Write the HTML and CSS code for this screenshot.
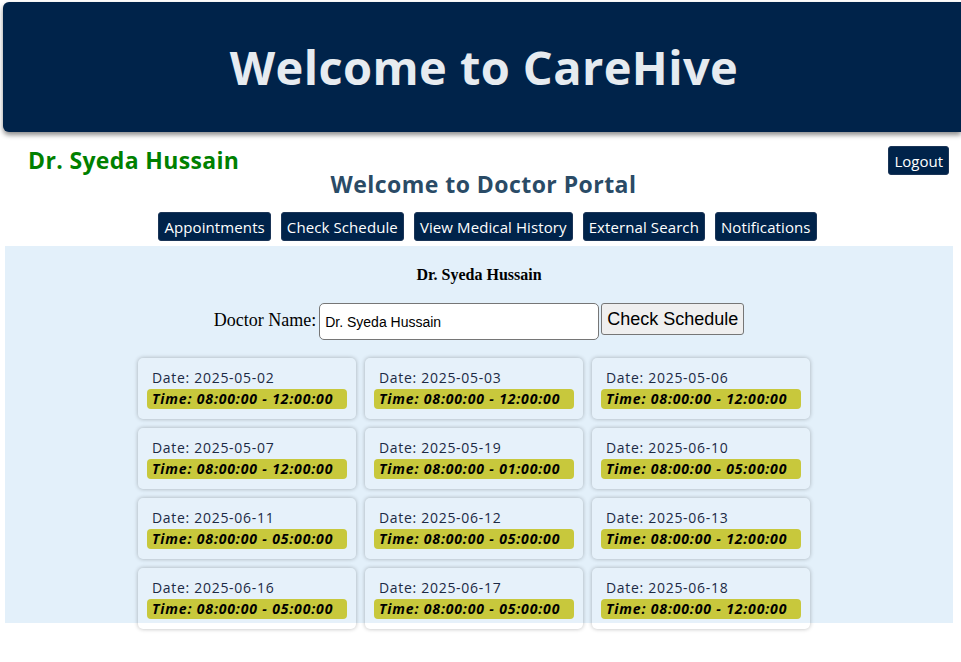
FILE: index.html
```html
<!DOCTYPE html>
<html>
<head>
<meta charset="utf-8">
<link rel="stylesheet" href="styles.css">
</head>
<body>
<header class="hero">
  <h1 class="hero-title">Welcome to CareHive</h1>
</header>
<div class="topbar">
  <h2 class="doc-name">Dr. Syeda Hussain</h2>
  <button class="btn logout">Logout</button>
</div>
<h2 class="portal-title">Welcome to Doctor Portal</h2>
<nav class="nav">
  <button class="btn">Appointments</button>
  <button class="btn">Check Schedule</button>
  <button class="btn">View Medical History</button>
  <button class="btn">External Search</button>
  <button class="btn">Notifications</button>
</nav>
<section class="panel">
  <h3 class="panel-name">Dr. Syeda Hussain</h3>
  <form class="search">
    <label class="search-label">Doctor Name:</label>
    <input class="search-input" type="text" value="Dr. Syeda Hussain">
    <button class="search-btn" type="button">Check Schedule</button>
  </form>
  <div class="grid">
    <div class="card"><p class="date">Date: 2025-05-02</p><p class="time">Time: 08:00:00 - 12:00:00</p></div>
    <div class="card"><p class="date">Date: 2025-05-03</p><p class="time">Time: 08:00:00 - 12:00:00</p></div>
    <div class="card"><p class="date">Date: 2025-05-06</p><p class="time">Time: 08:00:00 - 12:00:00</p></div>
    <div class="card"><p class="date">Date: 2025-05-07</p><p class="time">Time: 08:00:00 - 12:00:00</p></div>
    <div class="card"><p class="date">Date: 2025-05-19</p><p class="time">Time: 08:00:00 - 01:00:00</p></div>
    <div class="card"><p class="date">Date: 2025-06-10</p><p class="time">Time: 08:00:00 - 05:00:00</p></div>
    <div class="card"><p class="date">Date: 2025-06-11</p><p class="time">Time: 08:00:00 - 05:00:00</p></div>
    <div class="card"><p class="date">Date: 2025-06-12</p><p class="time">Time: 08:00:00 - 05:00:00</p></div>
    <div class="card"><p class="date">Date: 2025-06-13</p><p class="time">Time: 08:00:00 - 12:00:00</p></div>
    <div class="card"><p class="date">Date: 2025-06-16</p><p class="time">Time: 08:00:00 - 05:00:00</p></div>
    <div class="card"><p class="date">Date: 2025-06-17</p><p class="time">Time: 08:00:00 - 05:00:00</p></div>
    <div class="card"><p class="date">Date: 2025-06-18</p><p class="time">Time: 08:00:00 - 12:00:00</p></div>
  </div>
</section>
</body>
</html>
```

FILE: styles.css
```css
body {
  margin: 0;
  padding: 0;
  background: #ffffff;
  font-family: "Open Sans", "DejaVu Sans", sans-serif;
}
.hero {
  margin: 2px 0 0 3px;
  height: 130px;
  background: #00234a;
  border-radius: 6px 0 0 6px;
  box-shadow: 0 3px 5px rgba(0, 0, 0, 0.45);
  display: flex;
  align-items: center;
  justify-content: center;
}
.hero-title {
  margin: 0 0 0 4px;
  color: #e6ebf0;
  font-size: 47px;
  font-weight: 700;
  letter-spacing: 0.4px;
}
.topbar {
  display: flex;
  justify-content: space-between;
  align-items: flex-start;
  padding: 14px 12px 0 28px;
  height: 30px;
}
.doc-name {
  margin: 0;
  color: #008000;
  font-size: 23px;
  line-height: 28px;
  font-weight: 700;
  letter-spacing: 0.35px;
}
.btn {
  font-family: "Open Sans", "DejaVu Sans", sans-serif;
  background: #00234a;
  color: #ffffff;
  border: 1px solid #1b3557;
  border-radius: 3px;
  font-size: 15px;
  padding: 0 5px;
  height: 29px;
  cursor: pointer;
}
.portal-title {
  margin: -6px 0 0;
  padding-left: 6px;
  text-align: center;
  color: #2a4b66;
  font-size: 23px;
  line-height: 28px;
  font-weight: 700;
  letter-spacing: 0.45px;
}
.nav {
  display: flex;
  justify-content: center;
  gap: 10px;
  margin-top: 14px;
  padding-left: 14px;
}
.nav .btn {
  padding: 0 5px;
  letter-spacing: 0.1px;
}
.panel {
  margin: 5px 8px 0 5px;
  padding-bottom: 20px;
  background: linear-gradient(#e3f0fa, #e3f0fa) no-repeat top left / 100% 377px;
  display: flex;
  flex-direction: column;
  align-items: center;
}
.panel-name {
  margin: 19px 0 0;
  font-family: "Liberation Serif", serif;
  font-size: 16px;
  line-height: 19px;
  font-weight: 700;
}
.search {
  margin-top: 19px;
  display: flex;
  align-items: center;
  gap: 2px;
}
.search-label {
  font-family: "Liberation Serif", serif;
  font-size: 18px;
  margin-right: 1px;
  margin-top: -2px;
}
.search-input {
  width: 280px;
  height: 37px;
  box-sizing: border-box;
  border: 1px solid #767676;
  border-radius: 5px;
  padding: 0 5px;
  font-family: "Liberation Sans", Arial, sans-serif;
  font-size: 14px;
  background: #ffffff;
}
.search-btn {
  margin-left: 0;
  margin-top: -5px;
  height: 32px;
  padding: 0 5px;
  font-family: "Liberation Sans", Arial, sans-serif;
  font-size: 18px;
  background: #efefef;
  border: 1px solid #767676;
  border-radius: 3px;
  color: #000;
}
.grid {
  margin-top: 18px;
  margin-left: -10px;
  display: grid;
  grid-template-columns: repeat(3, 218px);
  column-gap: 9px;
  row-gap: 9px;
}
.card {
  height: 61px;
  box-sizing: border-box;
  padding: 11px 9px 0;
  border-radius: 5px;
  background: rgba(255, 255, 255, 0.12);
  box-shadow: 0 0 4px rgba(0, 0, 0, 0.28);
}
.date {
  margin: 0;
  padding: 0 5px;
  font-size: 14px;
  line-height: 18px;
  color: #1c2a45;
  letter-spacing: 0.7px;
}
.time {
  margin: 2px 0 0;
  padding: 0 5px;
  height: 20px;
  line-height: 20px;
  border-radius: 4px;
  background: #c8c83c;
  font-size: 14px;
  font-weight: 700;
  font-style: italic;
  color: #000;
  letter-spacing: 0.85px;
}
```
